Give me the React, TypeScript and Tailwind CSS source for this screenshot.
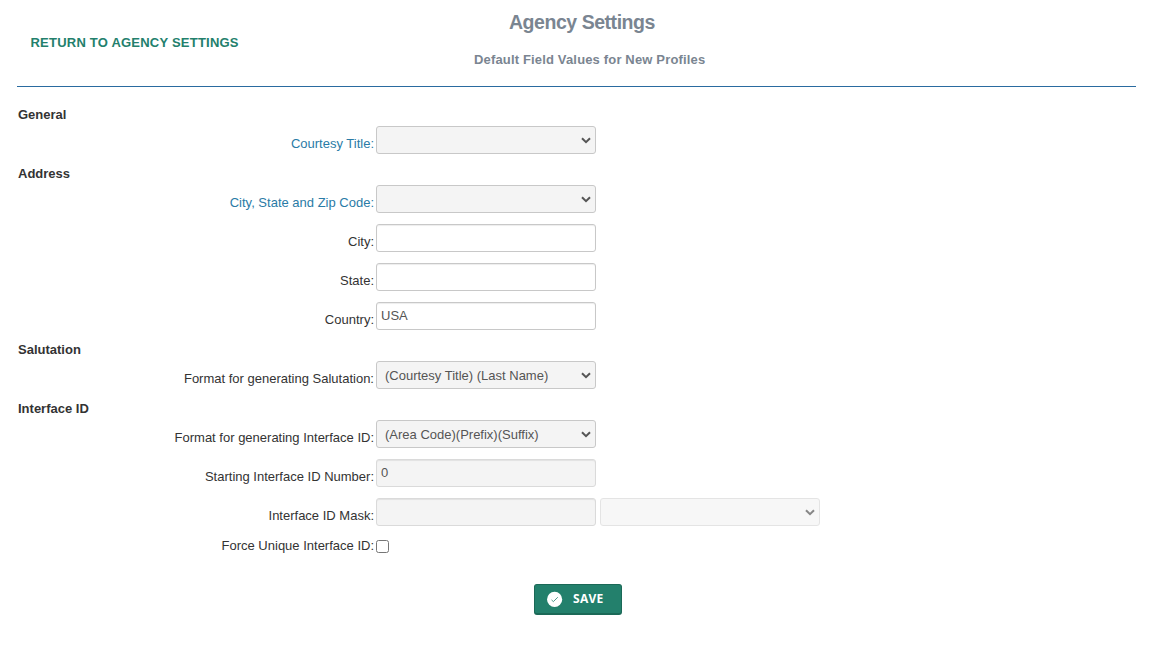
import type { ReactNode } from "react";

const fieldBase = "block h-7 w-[220px] rounded-[3px] border text-[13px] text-[#555]";

function Section({ title }: { title: string }) {
  return (
    <h3 className="h-5 pl-[18px] text-[13px] leading-[22px] font-bold text-[#333]">{title}</h3>
  );
}

function Row({ label, link, children }: { label: string; link?: boolean; children: ReactNode }) {
  return (
    <div className="flex h-[39px] items-start pt-0.5">
      <label
        className={`w-[374px] shrink-0 pt-2 text-right leading-5 whitespace-nowrap ${
          link ? "text-[#2a7ba6]" : "text-[#333]"
        }`}
      >
        {label}
      </label>
      <div className="ml-0.5 flex gap-1">{children}</div>
    </div>
  );
}

function Select({ value = "", disabled }: { value?: string; disabled?: boolean }) {
  return (
    <div className={`relative ${disabled ? "opacity-70" : ""}`}>
      <select
        disabled={disabled}
        className={`${fieldBase} appearance-none bg-[#f4f4f4] pt-px pr-5 pl-2 ${
          disabled ? "border-[#dadada]" : "border-[#c8c8c8]"
        }`}
      >
        <option>{value}</option>
      </select>
      <svg
        viewBox="0 0 10 7"
        className="pointer-events-none absolute top-[11px] right-[5px] h-[7px] w-2.5"
      >
        <path d="M1 1.2l4 4 4-4" fill="none" stroke="#555" strokeWidth="2" />
      </svg>
    </div>
  );
}

function TextInput({ value = "", disabled }: { value?: string; disabled?: boolean }) {
  return (
    <input
      type="text"
      defaultValue={value}
      disabled={disabled}
      className={`${fieldBase} px-1 pb-px shadow-[inset_0_1px_1px_rgba(0,0,0,0.075)] ${
        disabled ? "border-[#dadada] bg-[#f4f4f4]" : "border-[#c8c8c8] bg-white"
      }`}
    />
  );
}

export default function App() {
  return (
    <main className="h-[650px] w-[1160px] overflow-hidden bg-white font-['Liberation_Sans',Arial,sans-serif] text-[13px]">
      <header className="mr-6 ml-[17px] grid h-[87px] grid-cols-[457px_1fr] border-b border-[#2a6ba0]">
        <a className="pt-[32px] pl-[13.5px] text-[13px] leading-[21px] font-bold tracking-[0.22px] text-[#23806c]">
          RETURN TO AGENCY SETTINGS
        </a>
        <div>
          <h1 className="pt-2.5 pl-[35px] text-[19.5px] leading-[25px] font-bold tracking-[-0.46px] text-[#7a8591]">
            Agency Settings
          </h1>
          <h2 className="pt-[15px] text-[13px] leading-5 font-bold tracking-[0.16px] text-[#7a8591]">
            Default Field Values for New Profiles
          </h2>
        </div>
      </header>

      <form className="pt-[17px]">
        <Section title="General" />
        <Row label="Courtesy Title:" link>
          <Select />
        </Row>
        <Section title="Address" />
        <Row label="City, State and Zip Code:" link>
          <Select />
        </Row>
        <Row label="City:">
          <TextInput />
        </Row>
        <Row label="State:">
          <TextInput />
        </Row>
        <Row label="Country:">
          <TextInput value="USA" />
        </Row>
        <Section title="Salutation" />
        <Row label="Format for generating Salutation:">
          <Select value="(Courtesy Title) (Last Name)" />
        </Row>
        <Section title="Interface ID" />
        <Row label="Format for generating Interface ID:">
          <Select value="(Area Code)(Prefix)(Suffix)" />
        </Row>
        <Row label="Starting Interface ID Number:">
          <TextInput value="0" disabled />
        </Row>
        <Row label="Interface ID Mask:">
          <TextInput disabled />
          <Select disabled />
        </Row>
        <div className="flex h-[49px] items-start">
          <label className="w-[374px] pt-px text-right leading-5 text-[#333]">
            Force Unique Interface ID:
          </label>
          <input type="checkbox" className="mt-[5px] ml-0.5 size-[13px]" />
        </div>
        <button
          type="button"
          className="ml-[534px] flex h-[31px] w-[88px] items-center rounded-[3px] border border-b-2 border-[#1b6957] bg-[#23806c] pl-3 font-['Open_Sans',sans-serif] text-[12px] font-bold text-white"
        >
          <svg viewBox="0 0 16 16" className="mr-2.5 size-4">
            <circle cx="7.6" cy="8.4" r="7.6" fill="#fff" />
            <path d="M4.5 8.9l1.9 1.7 4.4-4.4" fill="none" stroke="#23806c" strokeWidth="0.8" />
          </svg>
          <span className="tracking-[0.3px]">SAVE</span>
        </button>
      </form>
    </main>
  );
}
